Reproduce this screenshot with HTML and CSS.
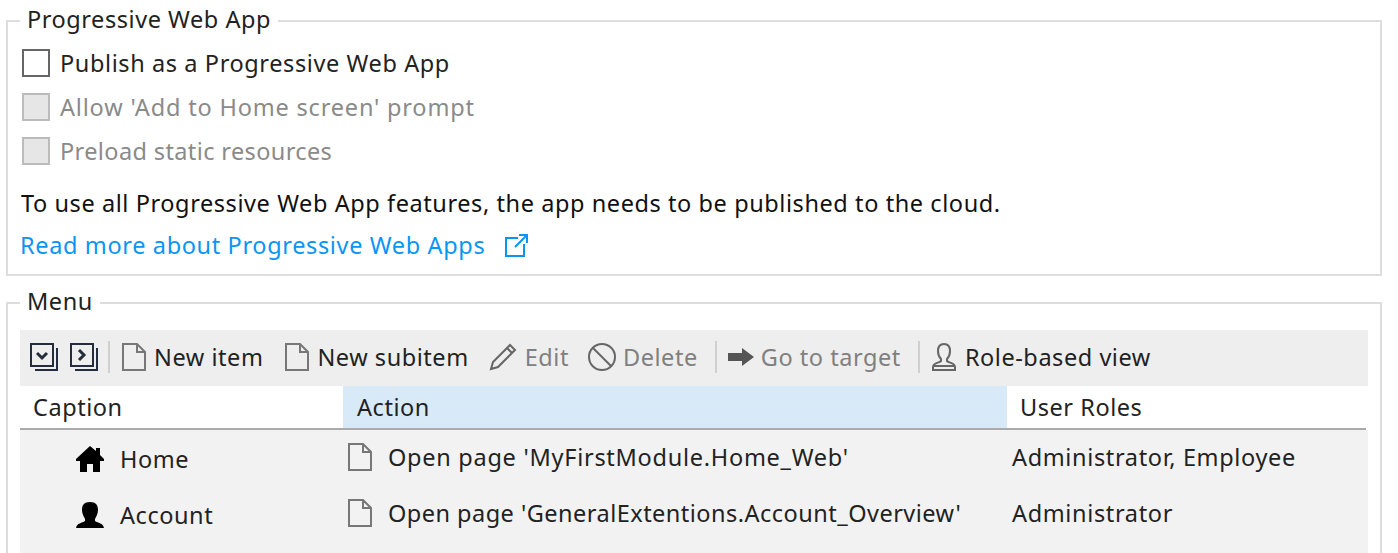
FILE: index.html
```html
<!DOCTYPE html>
<html lang="en">
<head>
<meta charset="utf-8">
<title>Navigation</title>
<link rel="stylesheet" href="styles.css">
</head>
<body>
<svg class="defs" width="0" height="0" aria-hidden="true">
  <symbol id="doc" viewBox="0 0 24 28">
    <path d="M1 1H15L23 9V27H1Z M15 1V9H23" fill="none" stroke="currentColor" stroke-width="2"/>
  </symbol>
</svg>
<fieldset class="group pwa">
  <legend>Progressive Web App</legend>
  <div class="check"><span class="box"></span>Publish as a Progressive Web App</div>
  <div class="check off wide"><span class="box"></span>Allow 'Add to Home screen' prompt</div>
  <div class="check off tight"><span class="box"></span>Preload static resources</div>
  <p class="note">To use all Progressive Web App features, the app needs to be published to the cloud.</p>
  <a class="more" href="#">Read more about Progressive Web Apps
    <svg class="ext" viewBox="0 0 24 24" width="24" height="24"><path d="M13 5H1V23H19V11M10 14L22 2M14 2H22V10" fill="none" stroke="currentColor" stroke-width="2"/></svg>
  </a>
</fieldset>
<fieldset class="group menu">
  <legend>Menu</legend>
  <div class="toolbar">
    <svg class="square" viewBox="0 0 28 28" width="28" height="28"><path d="M1 1H23V23H1Z M5 27H27V5" fill="none" stroke="#252c3d" stroke-width="2"/><path d="M7 10L12 15L17 10" fill="none" stroke="#252c3d" stroke-width="3"/></svg>
    <svg class="square" viewBox="0 0 28 28" width="28" height="28"><path d="M1 1H23V23H1Z M5 27H27V5" fill="none" stroke="#252c3d" stroke-width="2"/><path d="M9 7L14 12L9 17" fill="none" stroke="#252c3d" stroke-width="3"/></svg>
    <span class="sep s1"></span>
    <span class="tool t-new"><svg class="doc"><use href="#doc"/></svg>New item</span>
    <span class="tool t-sub"><svg class="doc"><use href="#doc"/></svg>New subitem</span>
    <span class="tool off t-edit"><svg viewBox="0 0 28 28" width="28" height="28"><path d="M2 26L4 19L21 2L26 7L9 24Z M18 5L23 10" fill="none" stroke="#666" stroke-width="2"/></svg>Edit</span>
    <span class="tool off t-del"><svg viewBox="0 0 28 28" width="28" height="28"><circle cx="14" cy="14" r="13" fill="none" stroke="#666" stroke-width="2"/><path d="M5 5L23 23" stroke="#666" stroke-width="2"/></svg>Delete</span>
    <span class="sep s2"></span>
    <span class="tool off t-go"><svg viewBox="0 0 26 18" width="26" height="18"><path d="M0 5H14V0L26 9L14 18V13H0Z" fill="#555"/></svg>Go to target</span>
    <span class="sep s3"></span>
    <span class="tool t-role"><svg viewBox="0 0 24 28" width="24" height="28"><path d="M12 1C7.500 1 6 4.500 6 8C6 12 8 15 9 16V18C7 20 1 20 1 24V27H23V24C23 20 17 20 15 18V16C16 15 18 12 18 8C18 4.500 16.500 1 12 1Z M1 23H23" fill="none" stroke="#666" stroke-width="2"/></svg>Role-based view</span>
  </div>
  <div class="grid head">
    <div class="cell-h">Caption</div>
    <div class="cell-h sorted">Action</div>
    <div class="cell-h">User Roles</div>
  </div>
  <div class="rows">
    <div class="grid row">
      <div class="cap"><svg viewBox="0 0 28 26" width="28" height="26"><path d="M14 0L20 5V2H24V9L28 13V15H24V26H17V18H11V26H4V15H0V13Z" fill="#000"/></svg><span class="cap-text">Home</span></div>
      <div class="act first"><svg class="doc"><use href="#doc"/></svg>Open page 'MyFirstModule.Home_Web'</div>
      <div class="roles">Administrator, Employee</div>
    </div>
    <div class="grid row">
      <div class="cap"><svg viewBox="0 0 28 26" width="28" height="26"><path d="M14 0C20 0 22 3 22 8C22 12 20 15 19 17V19C22 21 27 21 28 26H0C1 21 6 21 9 19V17C8 15 6 12 6 8C6 3 8 0 14 0Z" fill="#000"/></svg><span class="cap-text">Account</span></div>
      <div class="act"><svg class="doc"><use href="#doc"/></svg>Open page 'GeneralExtentions.Account_Overview'</div>
      <div class="roles">Administrator</div>
    </div>
  </div>
</fieldset>
</body>
</html>
```
FILE: styles.css
```css
* { box-sizing: border-box; }
html, body { height: 553px; overflow: hidden; }
body {
  margin: 0;
  padding: 5px 16px 0 6px;
  background: #fff;
  color: #222;
  font: 23.500px/32px "Noto Sans", sans-serif;
  letter-spacing: 0.55px;
}
.defs { position: absolute; }
.group {
  margin: 0;
  padding: 0 12px;
  border: 2px solid #ddd;
  min-width: 0;
}
legend {
  padding: 0 7px 4px 7px;
  line-height: 28px;
}
.pwa { height: 271px; padding-top: 4px; }
.menu { margin-top: 11px; height: 266px; padding-top: 11px; border-bottom: 0; }
.check { display: flex; align-items: center; height: 44px; margin-left: 2px; letter-spacing: 0.6px; }
.check.wide { letter-spacing: 0.82px; }
.check.tight { letter-spacing: 0.38px; }
.box {
  width: 28px; height: 28px; margin-right: 10px;
  border: 2px solid #666; background: #fff; flex: none;
}
.check.off { color: #8a8a8a; }
.check.off .box { background: #e6e6e6; border-color: #bbb; }
.note { margin: 8px 0 0 1px; height: 42px; line-height: 44px; color: #111; white-space: nowrap; letter-spacing: 0.58px; }
.more {
  display: flex; align-items: center; height: 44px;
  color: #0a95f5; text-decoration: none; letter-spacing: 0.64px;
}
.ext { margin-left: 20px; }
.toolbar {
  display: flex; align-items: center; height: 56px; padding: 0 0 2px 10px;
  background: #eee;
}
.square { flex: none; }
.square + .square { margin-left: 12px; }
.sep { width: 2px; height: 32px; background: #d0d0d0; flex: none; }
.s1 { margin-left: 10px; }
.s2 { margin-left: 17px; }
.s3 { margin-left: 17px; }
.tool { display: flex; align-items: center; gap: 8px; white-space: nowrap; }
.tool.off { color: #808080; }
.t-new { margin-left: 12px; }
.t-sub { margin-left: 22px; }
.t-edit { margin-left: 20px; gap: 8px; }
.t-del { margin-left: 19px; gap: 7px; }
.t-go { margin-left: 11px; gap: 7px; }
.t-role { margin-left: 12px; gap: 9px; }
.doc { width: 24px; height: 28px; color: #777; flex: none; }
.grid { display: grid; grid-template-columns: 322px 665px 1fr; }
.head { height: 44px; border-bottom: 2px solid #aaa; background: #fff; margin-right: 2px; }
.cell-h { padding-left: 12px; line-height: 42px; border-left: 1px solid #fff; }
.cell-h.sorted { background: #d8e9f7; padding-left: 14px; }
.rows { height: 123px; background: #f2f2f2; }
.row { height: 56px; }
.cap { display: flex; align-items: center; padding-left: 56px; padding-top: 2px; }
.cap-text { margin-left: 16px; }
.act { display: flex; align-items: center; gap: 16px; padding-left: 6px; white-space: nowrap; padding-bottom: 2px; letter-spacing: 0.48px; }
.act.first { letter-spacing: 0.73px; }
.roles { padding-left: 5px; line-height: 54px; white-space: nowrap; letter-spacing: 0.64px; }
```
